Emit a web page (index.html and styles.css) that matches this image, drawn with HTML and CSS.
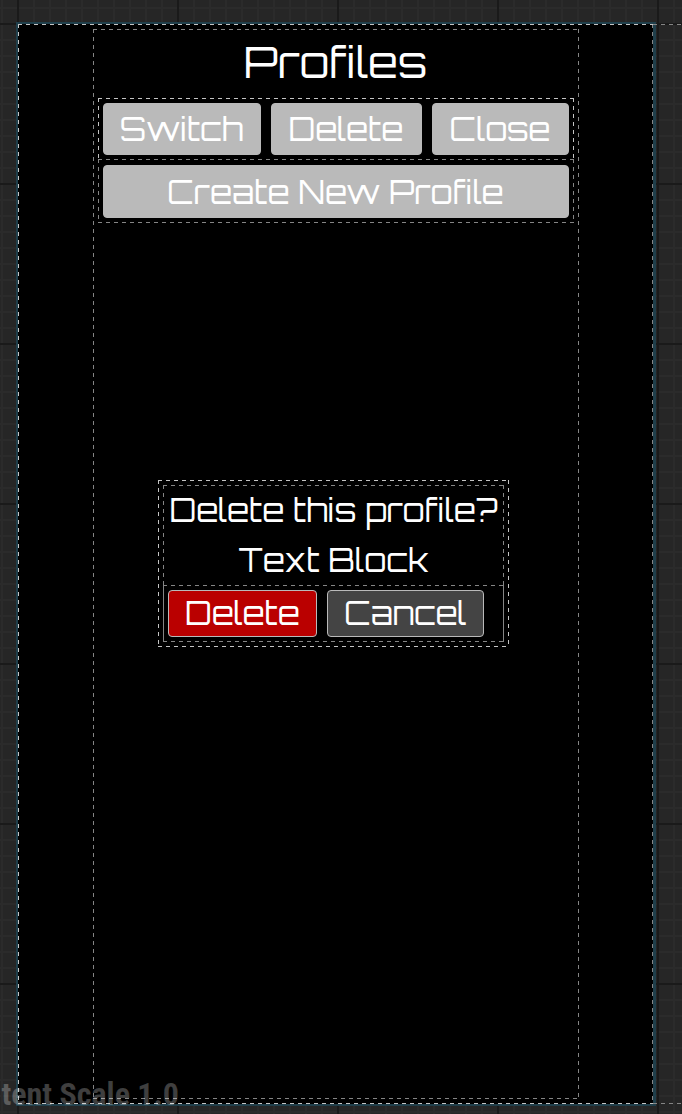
FILE: index.html
```html
<!DOCTYPE html>
<html lang="en">
<head>
  <meta charset="UTF-8" />
  <meta name="viewport" content="width=device-width, initial-scale=1.0"/>
  <title>Profiles</title>
  <link rel="stylesheet" href="styles.css">
</head>
<body>
  <div class="canvas">
    <main class="screen">
      <div class="screen-body outline bright">
        <!-- Profile list -->
        <section class="profiles outline">
          <h1>Profiles</h1>
          <div class="toolbar outline bright">
            <button type="button">Switch</button>
            <button type="button">Delete</button>
            <button type="button">Close</button>
          </div>
          <div class="create-row outline">
            <button type="button">Create New Profile</button>
          </div>
        </section>

        <!-- Delete confirmation -->
        <div class="dialog outline bright" role="dialog" aria-labelledby="dialog-title">
          <div class="dialog-body outline">
            <h2 id="dialog-title">Delete this profile?</h2>
            <p>Text Block</p>
            <div class="dialog-actions outline">
              <button type="button" class="confirm">Delete</button>
              <button type="button" class="cancel">Cancel</button>
            </div>
          </div>
        </div>
      </div>
    </main>
    <div class="scale-label">tent Scale 1.0</div>
  </div>
</body>
</html>
```

FILE: styles.css
```css
* {
  box-sizing: border-box;
}

body {
  margin: 0;
  background-color: #262626;
  color: white;
  font-family: Orbitron, "DejaVu Sans", sans-serif;
}

/* Designer grid: 16px minor cells, 160px major cells */
.canvas {
  position: relative;
  min-height: 100vh;
  padding: 22px 26px 8px 16px;
  overflow: hidden;
  background-image:
    linear-gradient(to right, #1a1a1a 2px, transparent 2px),
    linear-gradient(to bottom, #1a1a1a 2px, transparent 2px),
    linear-gradient(to right, #2b2b2b 2px, transparent 2px),
    linear-gradient(to bottom, #2b2b2b 2px, transparent 2px);
  background-size: 160px 160px, 160px 160px, 16px 16px, 16px 16px;
  background-position: 17px 23px;
}

/* Dashed guides, 4px on and 4px off */
.outline {
  --dash: #858585;
  --dash-right: var(--dash);
  --across: repeating-linear-gradient(to right, var(--dash) 0 4px, transparent 4px 8px);
  --down: repeating-linear-gradient(to bottom, var(--dash) 0 4px, transparent 4px 8px);
  --down-right: repeating-linear-gradient(to bottom, var(--dash-right) 0 4px, transparent 4px 8px);
  background-image: var(--across), var(--across), var(--down), var(--down-right);
  background-size: 100% 1px, 100% 1px, 1px 100%, 1px 100%;
  background-position: left top, left bottom, left top, right top;
  background-repeat: no-repeat;
}

.outline.bright {
  --dash: #c4c4c4;
}

.screen {
  display: flex;
  min-height: calc(100vh - 30px);
  border: 2px solid #203f4b;
  border-right-width: 3px;
  background-color: black;
}

.screen-body {
  --dash-right: #858585;
  position: relative;
  flex: 1;
  display: flex;
  justify-content: center;
  padding: 5px;
}

/* the top and bottom guides run on past the screen */
.screen-body::after {
  content: "";
  position: absolute;
  top: 0;
  bottom: 0;
  left: 100%;
  width: 100vw;
  background-image:
    repeating-linear-gradient(to right, #858585 0 4px, transparent 4px 8px),
    repeating-linear-gradient(to right, #858585 0 4px, transparent 4px 8px);
  background-size: 100% 1px;
  background-position: left top, left bottom;
  background-repeat: no-repeat;
}

.profiles {
  width: 486px;
  padding: 5px;
}

h1 {
  margin: 0;
  padding-bottom: 8px;
  font-size: 43px;
  font-weight: normal;
  line-height: 56px;
  text-align: center;
}

button {
  padding: 0;
  border: 1px solid #bababa;
  border-radius: 4px;
  background-color: #bababa;
  color: white;
  font-family: inherit;
  font-size: 32px;
  line-height: 44px;
  cursor: pointer;
}

.toolbar {
  display: grid;
  grid-template-columns: 158fr 151fr 137fr;
  gap: 10px;
  padding: 5px 5px 4px;
  background-size: 100% 1px, 0 0, 1px 100%, 1px 100%;
}

.toolbar button {
  height: 52px;
}

.create-row {
  display: flex;
  padding: 6px 5px 5px;
}

.create-row button {
  flex: 1;
  height: 53px;
}

.dialog {
  position: absolute;
  inset: 0 4px 2px 0;
  width: 351px;
  height: fit-content;
  margin: auto;
  padding: 5px;
  background-color: black;
}

h2,
.dialog-body p {
  margin: 0;
  font-size: 32px;
  font-weight: normal;
  line-height: 50px;
  text-align: center;
  white-space: nowrap;
}

.dialog-actions {
  display: grid;
  grid-template-columns: 149px 157px;
  gap: 10px;
  padding: 5px;
}

.dialog-actions button {
  height: 47px;
}

.confirm {
  background-color: #ba0000;
}

.cancel {
  background-color: #444;
}

.scale-label {
  position: absolute;
  bottom: 0;
  left: 0;
  display: flex;
  justify-content: flex-end;
  width: 179px;
  color: rgba(255, 255, 255, 0.25);
  font-family: "Roboto Condensed", Roboto, sans-serif;
  font-size: 32px;
  font-weight: bold;
  line-height: 40px;
  white-space: nowrap;
}
```
